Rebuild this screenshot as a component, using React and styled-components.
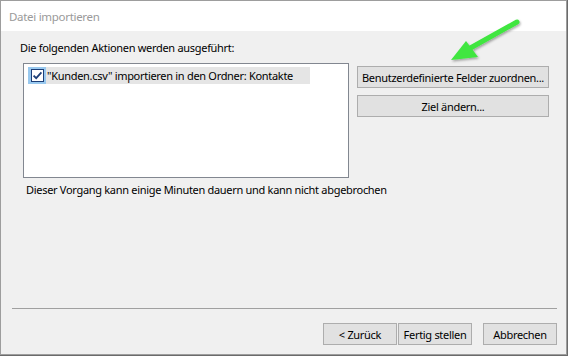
import React from "react";
import styled, { createGlobalStyle } from "styled-components";

const font = `"Noto Sans", "Liberation Sans", sans-serif`;

const GlobalStyle = createGlobalStyle`
  html, body {
    margin: 0;
    padding: 0;
    background: #6b6b6b;
  }
  body {
    font-family: ${font};
    font-size: 11px;
    letter-spacing: -0.3px;
    color: #000;
  }
`;

const Window = styled.div`
  position: relative;
  box-sizing: border-box;
  width: 567px;
  height: 355px;
  border: 1px solid #9d9d9d;
  background: #f0f0f0;
  display: flex;
  flex-direction: column;
`;

const TitleBar = styled.div`
  height: 30px;
  flex: none;
  background: #fff;
  display: flex;
  align-items: center;
  padding-left: 8px;
  color: #9a9a9a;
  font-size: 11.5px;
`;

const Body = styled.div`
  flex: 1;
  display: flex;
  flex-direction: column;
  padding: 9px 9px 9px 19px;
`;

const Label = styled.div`
  line-height: 16px;
  white-space: nowrap;
`;

const Row = styled.div`
  display: flex;
  gap: 8px;
  margin-top: 7px;
  padding-left: 3px;
`;

const ListBox = styled.div`
  box-sizing: border-box;
  width: 326px;
  height: 115px;
  border: 1px solid #828790;
  background: #fff;
  padding: 3px 4px;
`;

const Item = styled.div`
  display: flex;
  align-items: center;
  width: 282px;
  height: 17px;
  background: ${(p) => (p.$selected ? "#e5e5e5" : "transparent")};
  white-space: nowrap;
`;

const CheckWrap = styled.span`
  display: flex;
  align-items: center;
  justify-content: center;
  width: 18px;
  height: 17px;
  background: #99c9ef;
  margin-right: 1px;
`;

const Side = styled.div`
  display: flex;
  flex-direction: column;
  gap: 7px;
  margin-top: 3px;
`;

const Button = styled.div`
  box-sizing: border-box;
  width: ${(p) => p.$w || 74}px;
  height: 22px;
  border: 1px solid #adadad;
  background: #e1e1e1;
  display: flex;
  align-items: center;
  justify-content: center;
  white-space: nowrap;
  overflow: hidden;
`;

const Note = styled.div`
  margin-top: 4px;
  padding-left: 6px;
  line-height: 16px;
  white-space: nowrap;
`;

const Separator = styled.div`
  margin-top: auto;
  margin-left: -8px;
  height: 1px;
  background: #a0a0a0;
`;

const Footer = styled.div`
  display: flex;
  justify-content: flex-end;
  margin-top: 14px;
`;

const Gap = styled.div`
  width: ${(p) => p.$w}px;
`;

const Arrow = styled.svg`
  position: absolute;
  left: 440px;
  top: 10px;
`;

function CheckIcon() {
  return (
    <svg width="13" height="13" viewBox="0 0 13 13">
      <rect x="0.5" y="0.5" width="12" height="12" fill="#fff" stroke="#1d3f78" />
      <path d="M2.6 6.6 L5.2 9.2 L10.4 3.4" fill="none" stroke="#1d3f78" strokeWidth="1.8" />
    </svg>
  );
}

export default function App() {
  return (
    <>
      <GlobalStyle />
      <Window>
        <TitleBar>Datei importieren</TitleBar>
        <Body>
          <Label>Die folgenden Aktionen werden ausgeführt:</Label>
          <Row>
            <ListBox>
              <Item $selected>
                <CheckWrap>
                  <CheckIcon />
                </CheckWrap>
                "Kunden.csv" importieren in den Ordner: Kontakte
              </Item>
            </ListBox>
            <Side>
              <Button $w={192}>Benutzerdefinierte Felder zuordnen...</Button>
              <Button $w={192}>Ziel ändern...</Button>
            </Side>
          </Row>
          <Note>Dieser Vorgang kann einige Minuten dauern und kann nicht abgebrochen</Note>
          <Separator />
          <Footer>
            <Button>&lt; Zurück</Button>
            <Gap $w={1} />
            <Button>Fertig stellen</Button>
            <Gap $w={11} />
            <Button>Abbrechen</Button>
          </Footer>
        </Body>
        <Arrow width="90" height="60" viewBox="440 10 90 60">
          <defs>
            <filter id="sh" x="-20%" y="-20%" width="140%" height="140%">
              <feDropShadow dx="1" dy="1.5" stdDeviation="1" floodColor="#000" floodOpacity="0.35" />
            </filter>
          </defs>
          <g filter="url(#sh)" fill="#3fe63f">
            <line x1="516" y1="21" x2="464" y2="50" stroke="#3fe63f" strokeWidth="5" strokeLinecap="round" />
            <polygon points="450,59 465,40 477,56" />
          </g>
        </Arrow>
      </Window>
    </>
  );
}
